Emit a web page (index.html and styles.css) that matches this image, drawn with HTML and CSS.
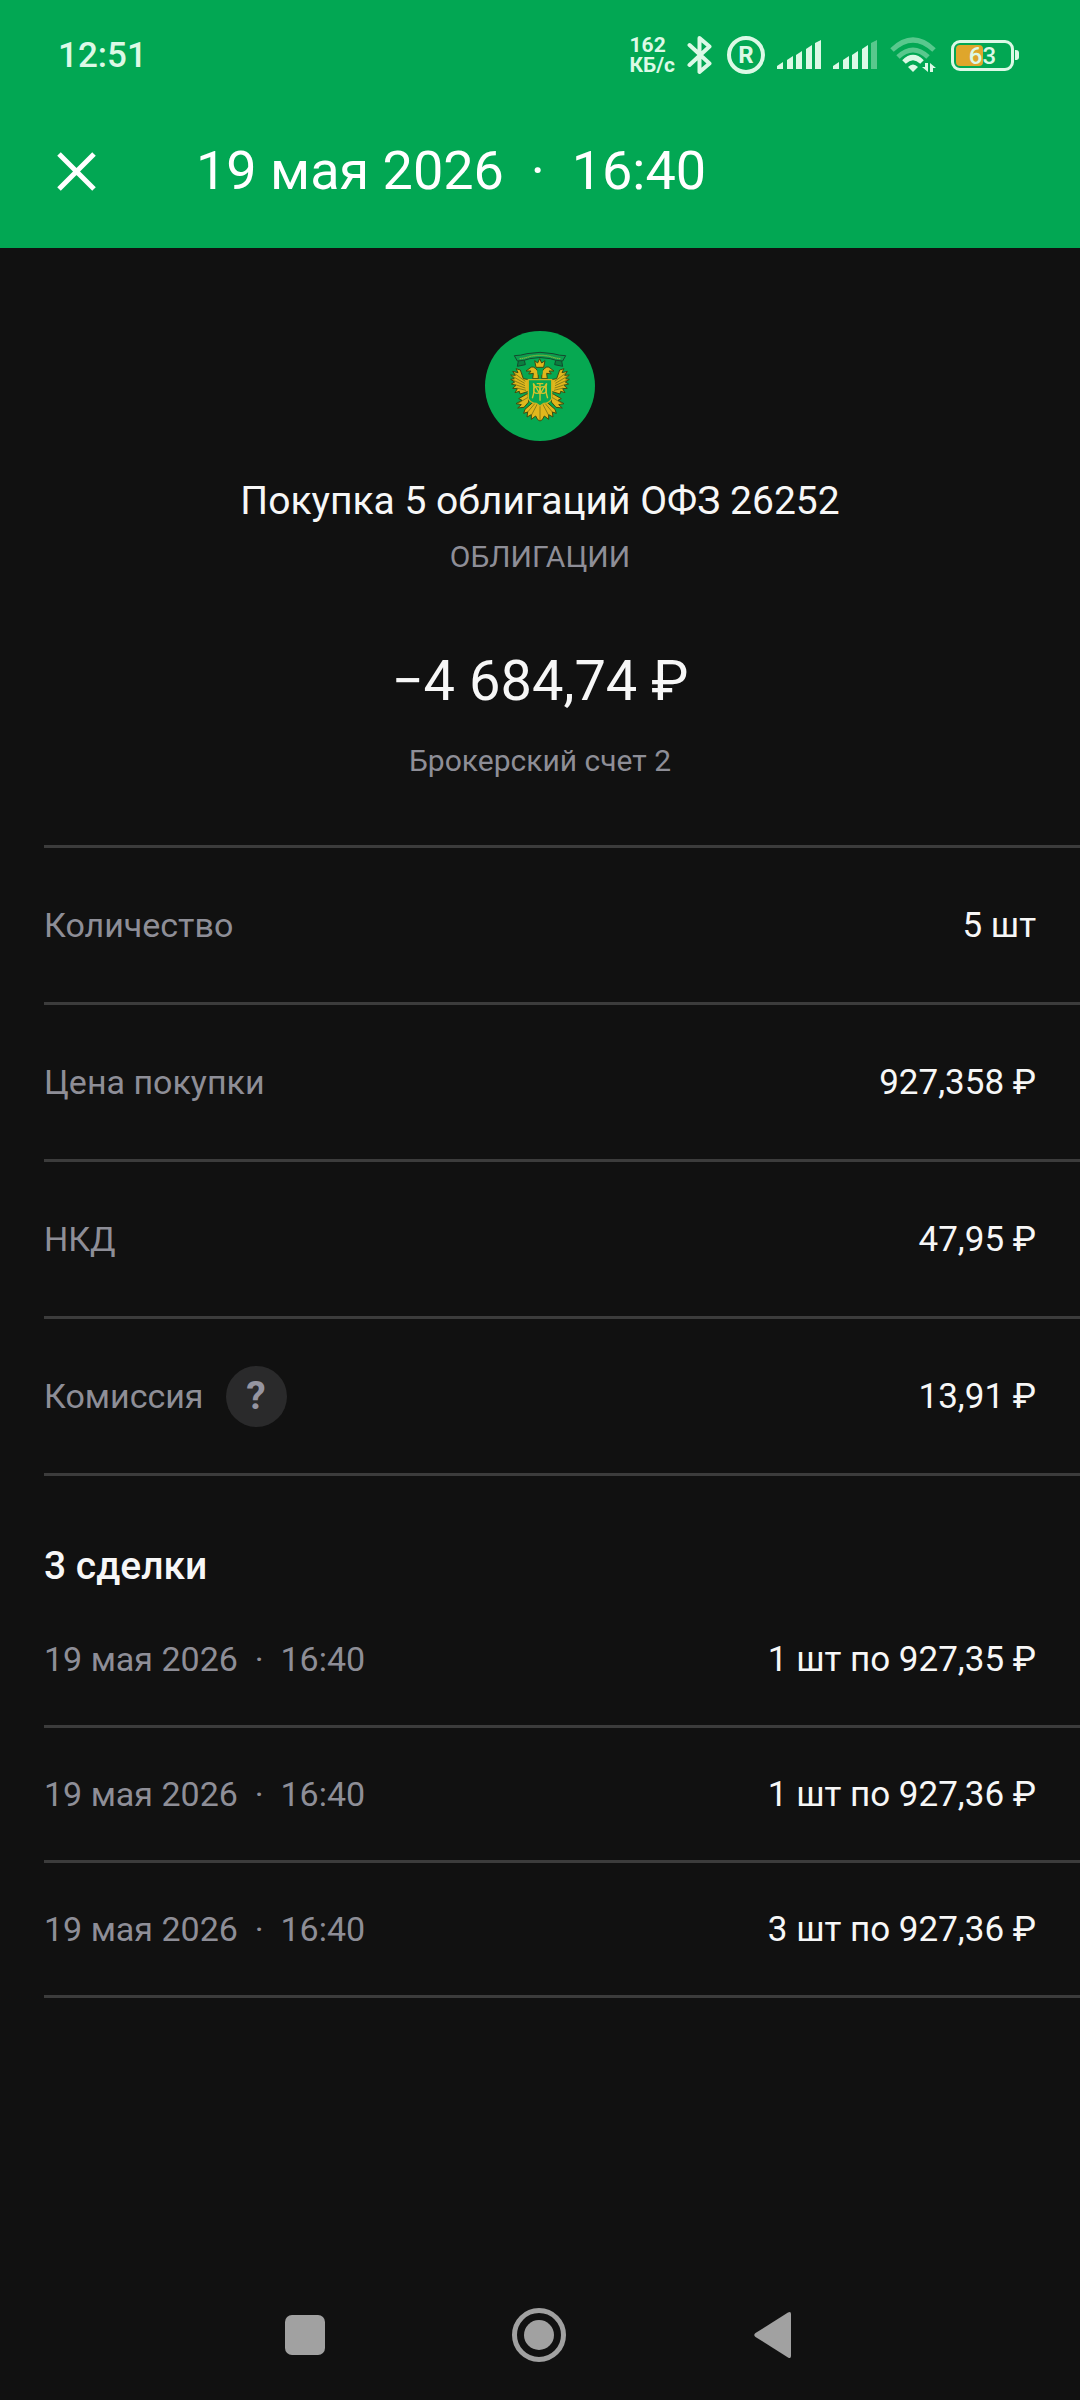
FILE: index.html
```html
<!DOCTYPE html>
<html lang="ru">
<head>
    <meta charset="UTF-8">
    <meta name="viewport" content="width=device-width, initial-scale=1.0">
    <link rel="stylesheet" href="styles.css">
    <title>Покупка облигаций</title>
</head>
<body>

    <header class="header">
        <!-- Строка состояния -->
        <div class="status">
            <span class="clock">12:51</span>
            <div class="status-icons">
                <span class="speed"><span>162</span><span>КБ/с</span></span>
                <svg class="bluetooth" width="28" height="40" viewBox="0 0 28 40">
                    <path d="M2.500 10 L22.500 28.500 L12.500 37 V3 L22.500 11.500 L2.500 30"/>
                </svg>
                <span class="roaming">R</span>
                <svg class="signal" width="44" height="32" viewBox="1 0 44 32">
                    <path d="M1 27 L7 23 V30 H1Z M11 21 L17 17 V30 H11Z M20 16 L26 12 V30 H20Z M30 10 L36 6 V30 H30Z M39 4 L45 1 V30 H39Z"/>
                </svg>
                <svg class="signal" width="44" height="32" viewBox="1 0 44 32">
                    <path d="M1 27 L7 23 V30 H1Z M11 21 L17 17 V30 H11Z M20 16 L26 12 V30 H20Z M30 10 L36 6 V30 H30Z"/>
                    <path class="dim" d="M39 4 L45 1 V30 H39Z"/>
                </svg>
                <svg class="wifi" width="50" height="36" viewBox="-1 0 50 36">
                    <path class="arc dim" d="M2 13 Q23 -7 44 13"/>
                    <path class="arc dim" d="M8 20 Q23 6 38 20"/>
                    <path class="arc" d="M14 25 Q23 16 32 25"/>
                    <path d="M18 30 Q23 25 28 30 L23 35Z"/>
                    <path d="M35 26 H38 V35 L32 30 H35Z M40 35 V26 L46 31 H43 V35Z"/>
                </svg>
                <span class="battery"><span class="battery-level"></span><span class="battery-text">63</span></span>
            </div>
        </div>
        <!-- Заголовок с кнопкой закрытия -->
        <div class="toolbar">
            <button class="close" type="button" aria-label="Закрыть">
                <svg width="40" height="40" viewBox="0 0 40 40"><path d="M3 3 L38 38 M38 3 L3 38"/></svg>
            </button>
            <h1 class="title">19 мая 2026 &nbsp;·&nbsp; 16:40</h1>
        </div>
    </header>

    <main class="content">
        <section class="summary">
            <svg class="emblem" width="110" height="110" viewBox="45 33 330 330">
                <circle cx="210" cy="198" r="165" fill="#06a851"/>
                <g stroke="#3f4c10" stroke-width="3" fill="#e0b71c" stroke-linejoin="round">
                    <!-- Крылья -->
                    <path d="M184 180 L160 176 L151 150 L138 146 L144 158 L128 154 L136 166 L122 165 L133 176 L122 178 L134 186 L124 192 L138 196 L128 205 L142 206 L135 218 L148 214 L150 222 L176 214Z"/>
                    <path d="M236 180 L260 176 L269 150 L282 146 L276 158 L292 154 L284 166 L298 165 L287 176 L298 178 L286 186 L296 192 L282 196 L292 205 L278 206 L285 218 L272 214 L270 222 L244 214Z"/>
                    <!-- Хвост и лапы -->
                    <path d="M174 220 L146 236 L156 241 L138 251 L154 254 L143 264 L162 262 L176 246Z"/>
                    <path d="M246 220 L274 236 L264 241 L282 251 L266 254 L277 264 L258 262 L244 246Z"/>
                    <path d="M190 246 L165 268 L161 280 L173 276 L171 291 L184 284 L184 298 L197 288 L203 299 L210 303 L217 299 L223 288 L236 298 L236 284 L249 291 L247 276 L259 280 L255 268 L230 246Z"/>
                    <!-- Головы -->
                    <path d="M205 176 L204 154 Q190 134 180 144 L168 153 L183 153 L176 162 L190 160 L188 176Z"/>
                    <path d="M215 176 L216 154 Q230 134 240 144 L252 153 L237 153 L244 162 L230 160 L232 176Z"/>
                    <path d="M198 142 L194 122 L203 129 L209 116 L215 129 L225 122 L221 142Z"/>
                </g>
                <!-- Перья -->
                <path d="M132 159 L166 184 M128 169 L164 190 M128 180 L165 197 M133 193 L166 204 M140 204 L168 211 M288 159 L254 184 M292 169 L256 190 M292 180 L255 197 M287 193 L254 204 M280 204 L252 211 M173 276 L195 250 M184 286 L203 250 M247 276 L225 250 M236 286 L217 250 M210 254 V300 M144 250 L174 232 M276 250 L246 232" fill="none" stroke="#5f6414" stroke-width="2"/>
                <path d="M201 151 H219 L217 163 L210 168 L203 163Z" fill="#06a851"/>
                <!-- Щит с вензелем -->
                <path d="M175 179 H245 V236 Q239 249 221 250 L210 258 L199 250 Q181 249 175 236Z" fill="#06a851" stroke="#c9b324" stroke-width="4"/>
                <g fill="none" stroke="#d2c32d" stroke-width="4">
                    <path d="M187 235 Q195 212 190 190 L210 222 L230 190 Q225 212 233 235 M210 190 V242 M200 191 H220"/>
                    <circle cx="201" cy="210" r="10"/>
                    <circle cx="219" cy="210" r="10"/>
                </g>
                <!-- Лента -->
                <path d="M145 123 L142 139 L166 134 L163 121 M275 123 L278 139 L254 134 L257 121" fill="#0a7f3f" stroke="#14492e" stroke-width="3"/>
                <path d="M133 107 Q151 107 171 101 Q210 93 249 101 Q269 107 287 107 L278 123 Q255 122 241 116 Q210 109 179 116 Q165 122 142 123Z" fill="#0c9c4d" stroke="#14492e" stroke-width="3"/>
                <path d="M149 116 Q164 115 180 109 Q210 103 240 109 Q256 115 271 116" fill="none" stroke="#8fb83c" stroke-width="4" stroke-dasharray="4 2"/>
            </svg>
            <h2 class="name">Покупка 5 облигаций ОФЗ 26252</h2>
            <p class="note">ОБЛИГАЦИИ</p>
            <p class="amount">−4 684,74 ₽</p>
            <p class="note">Брокерский счет 2</p>
        </section>

        <dl class="details">
            <div class="row">
                <dt>Количество</dt>
                <dd>5 шт</dd>
            </div>
            <div class="row">
                <dt>Цена покупки</dt>
                <dd>927,358 ₽</dd>
            </div>
            <div class="row">
                <dt>НКД</dt>
                <dd>47,95 ₽</dd>
            </div>
            <div class="row">
                <dt>Комиссия <button class="help" type="button" aria-label="О комиссии">?</button></dt>
                <dd>13,91 ₽</dd>
            </div>
        </dl>

        <h3 class="deals-title">3 сделки</h3>
        <dl class="deals">
            <div class="row">
                <dt>19 мая 2026 &nbsp;·&nbsp; 16:40</dt>
                <dd>1 шт по 927,35 ₽</dd>
            </div>
            <div class="row">
                <dt>19 мая 2026 &nbsp;·&nbsp; 16:40</dt>
                <dd>1 шт по 927,36 ₽</dd>
            </div>
            <div class="row">
                <dt>19 мая 2026 &nbsp;·&nbsp; 16:40</dt>
                <dd>3 шт по 927,36 ₽</dd>
            </div>
        </dl>
    </main>

    <!-- Системная навигация -->
    <nav class="navbar">
        <button type="button" aria-label="Последние приложения">
            <svg width="60" height="60" viewBox="0 0 60 60"><rect x="10" y="10" width="40" height="40" rx="7"/></svg>
        </button>
        <button type="button" aria-label="Домой">
            <svg width="60" height="60" viewBox="0 0 60 60"><circle class="ring" cx="29" cy="30" r="24.500"/><circle cx="29" cy="30" r="15"/></svg>
        </button>
        <button type="button" aria-label="Назад">
            <svg width="60" height="60" viewBox="0 0 60 60"><path d="M10.500 28 L43 7.500 Q46 6 46 9 V51 Q46 54 43 52.500 L10.500 32 Q8 30 10.500 28Z"/></svg>
        </button>
    </nav>

</body>
</html>
```
FILE: styles.css
```css
* {
    box-sizing: border-box;
}

body {
    margin: 0;
    min-height: 100vh;
    display: flex;
    flex-direction: column;
    background-color: #111111;
    color: #f7f7f7;
    font-family: Roboto, "Noto Sans", sans-serif;
}

h1, h2, h3, p, dl, dd {
    margin: 0;
    font-weight: 400;
}

button {
    padding: 0;
    border: none;
    background: none;
    cursor: pointer;
}

svg {
    display: block;
}

/* Зелёная шапка */
.header {
    background-color: #02a753;
    color: #ffffff;
}

.status {
    display: flex;
    justify-content: space-between;
    align-items: center;
    height: 94px;
    padding: 16px 66px 0 58px;
    color: #dcf9e6;
}

.clock {
    font-size: 35px;
    font-weight: 500;
}

.status-icons {
    display: flex;
    align-items: center;
    gap: 12px;
}

.speed {
    display: flex;
    flex-direction: column;
    font-size: 21px;
    line-height: 20px;
    font-weight: 700;
}

.bluetooth path {
    fill: none;
    stroke: #dcf9e6;
    stroke-width: 4;
    stroke-linejoin: round;
    stroke-linecap: round;
}

.roaming {
    width: 38px;
    height: 38px;
    border: 4px solid #dcf9e6;
    border-radius: 50%;
    font-size: 24px;
    line-height: 30px;
    font-weight: 700;
    text-align: center;
}

.signal path,
.wifi path {
    fill: #dcf9e6;
}

.wifi .arc {
    fill: none;
    stroke: #dcf9e6;
    stroke-width: 5;
}

.signal .dim,
.wifi .dim {
    opacity: 0.4;
}

.battery {
    position: relative;
    width: 63px;
    height: 31px;
    padding: 2px;
    border: 3px solid #dcf9e6;
    border-radius: 9px;
}

.battery::after {
    content: "";
    position: absolute;
    top: 7px;
    right: -8px;
    width: 4px;
    height: 10px;
    border-radius: 0 3px 3px 0;
    background-color: #dcf9e6;
}

.battery-level {
    display: block;
    width: 50%;
    height: 100%;
    border-radius: 4px;
    background-color: #dfa62b;
}

.battery-text {
    position: absolute;
    inset: 0;
    font-size: 24px;
    line-height: 26px;
    font-weight: 500;
    text-align: center;
}

.toolbar {
    display: flex;
    align-items: center;
    gap: 100px;
    height: 154px;
    padding: 0 56px;
}

.close path {
    fill: none;
    stroke: #ffffff;
    stroke-width: 5;
}

.title {
    font-size: 54px;
    line-height: 72px;
}

/* Сводка по операции */
.content {
    flex: 1;
}

.summary {
    display: flex;
    flex-direction: column;
    align-items: center;
    padding: 83px 44px 56px;
    text-align: center;
}

.name {
    margin-top: 32px;
    font-size: 39px;
    line-height: 56px;
}

.note {
    color: #8e8e97;
    font-size: 30px;
    line-height: 56px;
}

.amount {
    margin: 60px 0 16px;
    font-size: 56px;
    line-height: 72px;
}

/* Строки с параметрами */
.details {
    margin-left: 44px;
    border-top: 3px solid #3c3c3c;
}

.deals {
    margin-left: 44px;
}

.row {
    display: flex;
    justify-content: space-between;
    align-items: center;
    height: 157px;
    padding-right: 44px;
    border-bottom: 3px solid #3c3c3c;
    font-size: 35px;
}

.deals .row {
    height: 135px;
}

.row dt {
    display: flex;
    align-items: center;
    gap: 22px;
    color: #8e8e97;
    font-size: 34px;
}

.help {
    width: 61px;
    height: 61px;
    border-radius: 50%;
    background-color: #2a2a2b;
    color: #9595a1;
    font: 700 39px Roboto, "Noto Sans", sans-serif;
}

.deals-title {
    margin: 64px 44px 0;
    font-size: 39px;
    line-height: 53px;
    font-weight: 500;
}

/* Нижняя панель */
.navbar {
    display: flex;
    justify-content: center;
    gap: 175px;
    padding: 35px 0;
}

.navbar svg {
    fill: #a1a1a1;
}

.navbar .ring {
    fill: none;
    stroke: #a1a1a1;
    stroke-width: 5;
}
```
